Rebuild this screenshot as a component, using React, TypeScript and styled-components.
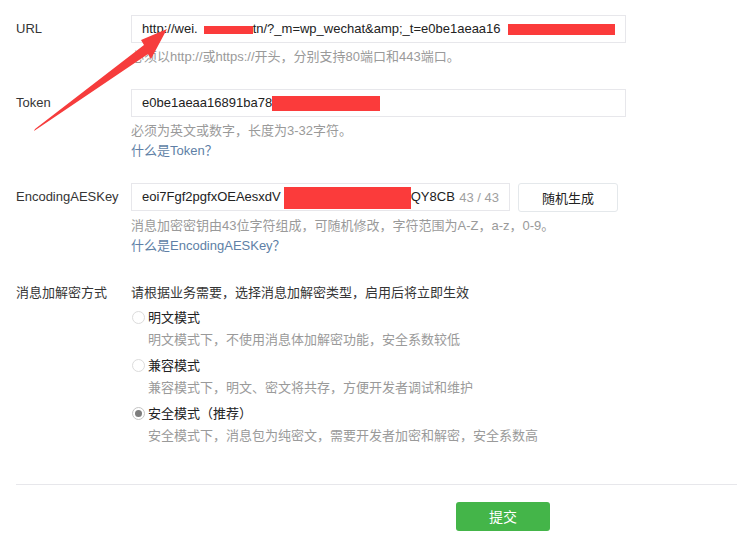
import React, { useState } from 'react'
import styled, { createGlobalStyle } from 'styled-components'

//styling:
const GlobalStyle = createGlobalStyle`
  html, body {
    margin: 0;
    padding: 0;
    background: #ffffff;
  }
  body {
    font-family: "Liberation Sans", "Noto Sans CJK SC", sans-serif;
    font-size: 13px;
    color: #353535;
  }
`
const Page = styled.div`
  position: relative;
  width: 737px;
  height: 536px;
  padding: 15px 0 0 16px;
  box-sizing: border-box;
  overflow: hidden;
`
const Row = styled.div<{ $gap?: number }>`
  display: flex;
  align-items: flex-start;
  margin-bottom: ${p => p.$gap ?? 22}px;
`
const Label = styled.div<{ $lh?: number }>`
  width: 115px;
  flex-shrink: 0;
  line-height: ${p => p.$lh ?? 28}px;
  color: #353535;
`
const Control = styled.div`
  display: flex;
  flex-direction: column;
`
const InputLine = styled.div`
  display: flex;
  gap: 8px;
`
const TextBox = styled.div<{ $w: number }>`
  width: ${p => p.$w}px;
  height: 28px;
  box-sizing: border-box;
  border: 1px solid #e7e7eb;
  padding: 0 10px;
  display: flex;
  align-items: center;
  background: #fff;
`
const BoxText = styled.div`
  flex: 1;
  min-width: 0;
  white-space: nowrap;
  overflow: hidden;
  line-height: 26px;
  color: #222;
`
const Counter = styled.span`
  flex-shrink: 0;
  color: #a0a0a0;
  margin-left: 4px;
  white-space: nowrap;
`
const Redact = styled.span<{ $w: number; $h: number; $ml?: number }>`
  display: inline-block;
  width: ${p => p.$w}px;
  height: ${p => p.$h}px;
  margin-left: ${p => p.$ml ?? 0}px;
  vertical-align: middle;
  background: #fb3b3b;
`
const Hint = styled.div<{ $mt?: number }>`
  margin-top: ${p => p.$mt ?? 4}px;
  line-height: 20px;
  color: #9a9a9a;
`
const HelpLink = styled.a`
  line-height: 20px;
  color: #607fa6;
  text-decoration: none;
  cursor: pointer;
`
const GhostButton = styled.button`
  width: 100px;
  height: 29px;
  margin-top: -0.5px;
  border: 1px solid #e4e8eb;
  border-radius: 3px;
  background: #fff;
  color: #222;
  font-family: inherit;
  font-size: 13px;
  cursor: pointer;
`
const Description = styled.div`
  line-height: 20px;
  color: #353535;
`
const RadioGroup = styled.div`
  margin-top: 5px;
  display: flex;
  flex-direction: column;
  gap: 6px;
`
const RadioItem = styled.div`
  display: flex;
  flex-direction: column;
  padding-left: 1px;
`
const RadioLabel = styled.label`
  display: flex;
  align-items: center;
  line-height: 20px;
  color: #222;
  cursor: pointer;
`
const RadioDot = styled.span<{ $on: boolean }>`
  width: 13px;
  height: 13px;
  box-sizing: border-box;
  border-radius: 50%;
  border: 1px solid ${p => (p.$on ? '#c4c4c4' : '#dcdcdc')};
  margin-right: 3px;
  display: flex;
  align-items: center;
  justify-content: center;
  &::after {
    content: '';
    width: 7px;
    height: 7px;
    border-radius: 50%;
    background: ${p => (p.$on ? '#7d7d7d' : 'transparent')};
  }
`
const RadioHint = styled.div`
  margin-top: 2px;
  padding-left: 16px;
  line-height: 20px;
  color: #9a9a9a;
`
const Divider = styled.div`
  margin-top: 38px;
  height: 1px;
  background: #e7e7eb;
`
const Footer = styled.div`
  padding: 17px 0 0 440px;
`
const SubmitButton = styled.button`
  width: 94px;
  height: 29px;
  border: none;
  border-radius: 3px;
  background: #44b549;
  color: #fff;
  font-family: inherit;
  font-size: 14px;
  cursor: pointer;
`
const Arrow = styled.svg`
  position: absolute;
  left: 0;
  top: 0;
  pointer-events: none;
`

const modes = [
  { key: 'plain', title: '明文模式', hint: '明文模式下，不使用消息体加解密功能，安全系数较低' },
  { key: 'compat', title: '兼容模式', hint: '兼容模式下，明文、密文将共存，方便开发者调试和维护' },
  { key: 'safe', title: '安全模式（推荐）', hint: '安全模式下，消息包为纯密文，需要开发者加密和解密，安全系数高' },
]

export default function App() {
  const [mode, setMode] = useState('safe')

  return (
    <>
      <GlobalStyle />
      <Page>
        <Row>
          <Label>URL</Label>
          <Control>
            <TextBox $w={495}>
              <BoxText>
                {'http://wei.'}<Redact $w={49} $h={8} $ml={6} />{'tn/?_m=wp_wechat&amp;_t=e0be1aeaa16'}<Redact $w={108} $h={11} $ml={7} />
              </BoxText>
            </TextBox>
            <Hint>必须以http://或https://开头，分别支持80端口和443端口。</Hint>
          </Control>
        </Row>

        <Row>
          <Label>Token</Label>
          <Control>
            <TextBox $w={495}>
              <BoxText>
                {'e0be1aeaa16891ba78'}<Redact $w={108} $h={15} />
              </BoxText>
            </TextBox>
            <Hint>必须为英文或数字，长度为3-32字符。</Hint>
            <HelpLink>什么是Token？</HelpLink>
          </Control>
        </Row>

        <Row $gap={27}>
          <Label>EncodingAESKey</Label>
          <Control>
            <InputLine>
              <TextBox $w={379}>
                <BoxText>
                  {'eoi7Fgf2pgfxOEAesxdV'}<Redact $w={127} $h={22} $ml={3} />{'QY8CB'}
                </BoxText>
                <Counter>43 / 43</Counter>
              </TextBox>
              <GhostButton>随机生成</GhostButton>
            </InputLine>
            <Hint>消息加密密钥由43位字符组成，可随机修改，字符范围为A-Z，a-z，0-9。</Hint>
            <HelpLink>什么是EncodingAESKey？</HelpLink>
          </Control>
        </Row>

        <Row $gap={0}>
          <Label $lh={20}>消息加解密方式</Label>
          <Control>
            <Description>请根据业务需要，选择消息加解密类型，启用后将立即生效</Description>
            <RadioGroup>
              {modes.map(m => (
                <RadioItem key={m.key}>
                  <RadioLabel onClick={() => setMode(m.key)}>
                    <RadioDot $on={mode === m.key} />
                    {m.title}
                  </RadioLabel>
                  <RadioHint>{m.hint}</RadioHint>
                </RadioItem>
              ))}
            </RadioGroup>
          </Control>
        </Row>

        <Divider />
        <Footer>
          <SubmitButton>提交</SubmitButton>
        </Footer>

        <Arrow width="200" height="140" viewBox="0 0 200 140">
          <polygon
            points="34,131 35,129 144,45 141,40 167,29 151,59 148,54"
            fill="#f63c3c"
          />
        </Arrow>
      </Page>
    </>
  )
}
